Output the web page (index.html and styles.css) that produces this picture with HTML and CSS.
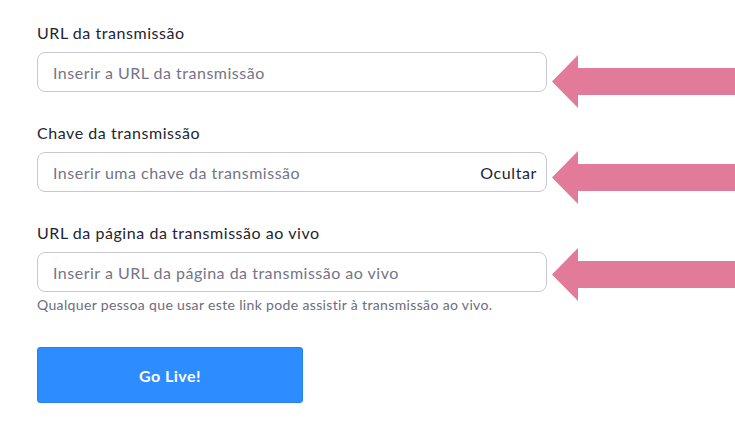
FILE: index.html
```html
<!DOCTYPE html>
<html lang="pt">
<head>
<meta charset="utf-8">
<title>Transmissão ao vivo</title>
<link rel="stylesheet" href="styles.css">
</head>
<body>
<div class="page">
  <form class="form">
    <div class="field">
      <label class="label">URL da transmissão</label>
      <div class="input"><span class="placeholder">Inserir a URL da transmissão</span></div>
    </div>
    <div class="field">
      <label class="label">Chave da transmissão</label>
      <div class="input"><span class="placeholder">Inserir uma chave da transmissão</span><span class="action">Ocultar</span></div>
    </div>
    <div class="field">
      <label class="label">URL da página da transmissão ao vivo</label>
      <div class="input"><span class="placeholder">Inserir a URL da página da transmissão ao vivo</span></div>
      <p class="help">Qualquer pessoa que usar este link pode assistir à transmissão ao vivo.</p>
    </div>
    <button type="button" class="btn">Go Live!</button>
  </form>
  <svg class="arrow arrow-1" width="183" height="53" viewBox="0 0 183 53"><path d="M0 26.5 L26 0 L26 13 L183 13 L183 40 L26 40 L26 53 Z" fill="#e27a9a"/></svg>
  <svg class="arrow arrow-2" width="183" height="53" viewBox="0 0 183 53"><path d="M0 26.5 L26 0 L26 13 L183 13 L183 40 L26 40 L26 53 Z" fill="#e27a9a"/></svg>
  <svg class="arrow arrow-3" width="183" height="53" viewBox="0 0 183 53"><path d="M0 26.5 L26 0 L26 13 L183 13 L183 40 L26 40 L26 53 Z" fill="#e27a9a"/></svg>
</div>
</body>
</html>
```

FILE: styles.css
```css
html, body {
  margin: 0;
  padding: 0;
  background: #ffffff;
}

body {
  font-family: Lato, "Open Sans", "Liberation Sans", sans-serif;
  color: #232333;
}

.page {
  position: relative;
  width: 735px;
  height: 446px;
  overflow: hidden;
}

.form {
  display: flex;
  flex-direction: column;
  width: 510px;
  padding: 23px 0 0 37px;
}

.field {
  display: flex;
  flex-direction: column;
  margin-bottom: 31px;
}

.field:nth-child(3) {
  margin-bottom: 34px;
}

.label {
  font-size: 16px;
  line-height: 20px;
  height: 20px;
  margin-bottom: 9px;
  letter-spacing: 0.55px;
  color: #232333;
}

.input {
  box-sizing: border-box;
  height: 40px;
  border: 1px solid #c9c7d5;
  border-radius: 8px;
  display: flex;
  align-items: center;
  justify-content: space-between;
  padding: 0 9px 0 15px;
  font-size: 16px;
  letter-spacing: 0.5px;
}

.placeholder {
  color: #747487;
}

.action {
  color: #232333;
  letter-spacing: 0.6px;
}

.help {
  margin: 5px 0 0 0;
  font-size: 14px;
  line-height: 16px;
  letter-spacing: 0.35px;
  color: #6c6c7c;
}

.btn {
  width: 266px;
  height: 56px;
  border: 1px solid #2681f2;
  border-radius: 3px;
  background: #2d8cff;
  color: #ffffff;
  font-family: Lato, "Open Sans", "Liberation Sans", sans-serif;
  font-size: 16px;
  font-weight: 700;
  letter-spacing: 0.5px;
  padding: 0;
}

.arrow {
  position: absolute;
  left: 552px;
}

.arrow-1 { top: 55px; }
.arrow-2 { top: 151px; }
.arrow-3 { top: 248px; }
```
